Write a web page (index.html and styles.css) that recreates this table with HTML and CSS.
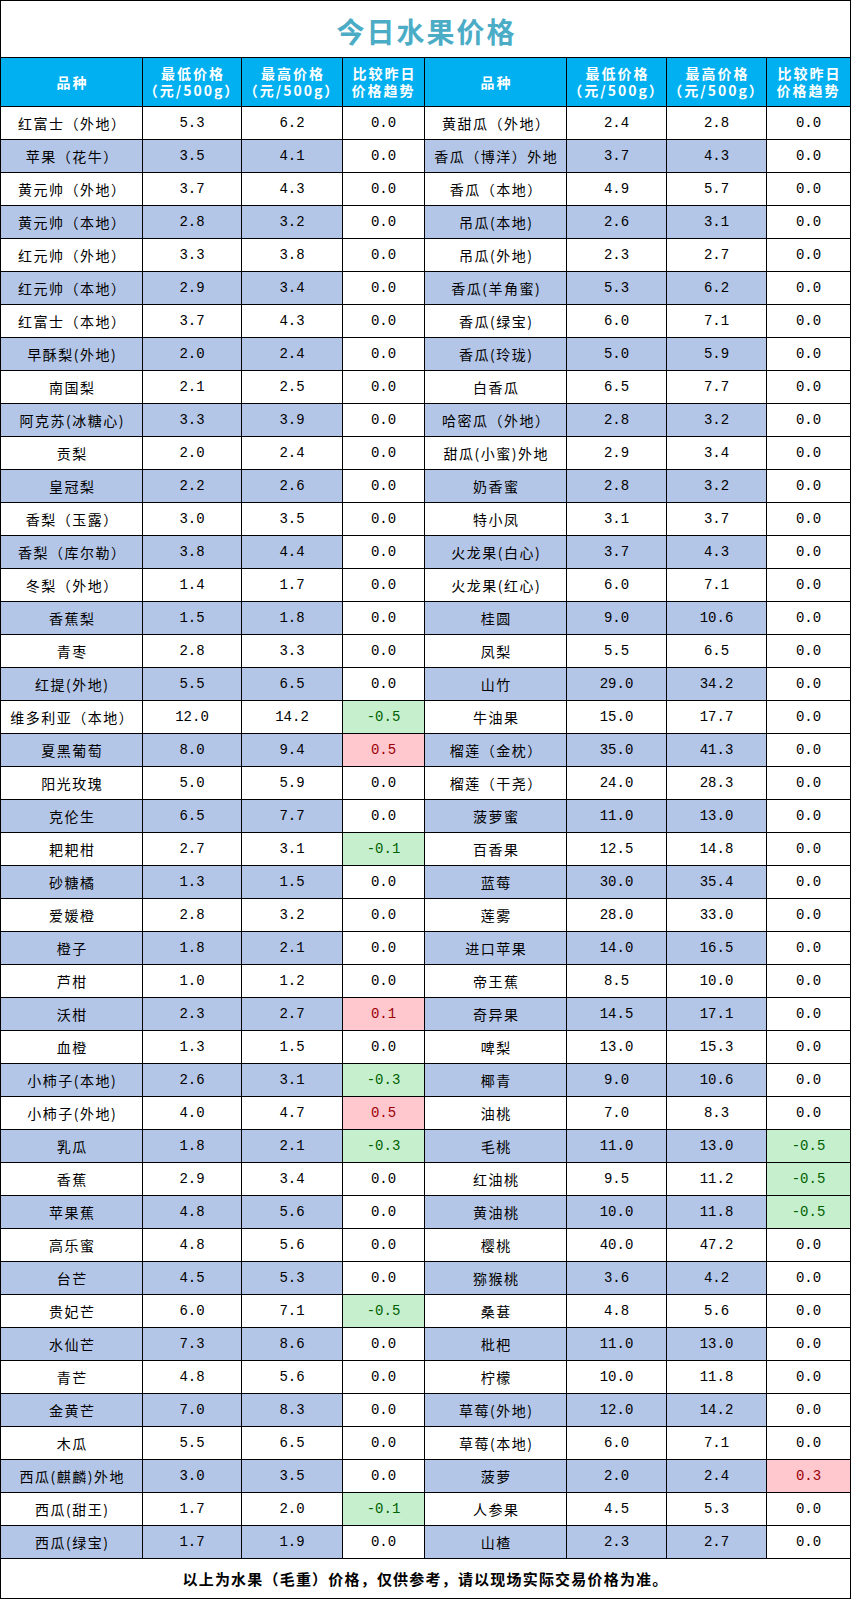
FILE: index.html
```html
<!DOCTYPE html>
<html lang="zh-CN">
<head>
<meta charset="utf-8">
<title>今日水果价格</title>
<link rel="stylesheet" href="styles.css">
</head>
<body>
<div class="sheet">
  <div class="title">今日水果价格</div>

  <div class="hd">品种</div>
  <div class="hd">最低价格<br>（元/500g）</div>
  <div class="hd">最高价格<br>（元/500g）</div>
  <div class="hd">比较昨日<br>价格趋势</div>
  <div class="hd">品种</div>
  <div class="hd">最低价格<br>（元/500g）</div>
  <div class="hd">最高价格<br>（元/500g）</div>
  <div class="hd">比较昨日<br>价格趋势</div>

  <div class="row"><div class="n">红富士（外地）</div><div>5.3</div><div>6.2</div><div class="t">0.0</div><div class="n">黄甜瓜（外地）</div><div>2.4</div><div>2.8</div><div class="t">0.0</div></div>
  <div class="row b"><div class="n">苹果（花牛）</div><div>3.5</div><div>4.1</div><div class="t">0.0</div><div class="n">香瓜（博洋）外地</div><div>3.7</div><div>4.3</div><div class="t">0.0</div></div>
  <div class="row"><div class="n">黄元帅（外地）</div><div>3.7</div><div>4.3</div><div class="t">0.0</div><div class="n">香瓜（本地）</div><div>4.9</div><div>5.7</div><div class="t">0.0</div></div>
  <div class="row b"><div class="n">黄元帅（本地）</div><div>2.8</div><div>3.2</div><div class="t">0.0</div><div class="n">吊瓜(本地)</div><div>2.6</div><div>3.1</div><div class="t">0.0</div></div>
  <div class="row"><div class="n">红元帅（外地）</div><div>3.3</div><div>3.8</div><div class="t">0.0</div><div class="n">吊瓜(外地)</div><div>2.3</div><div>2.7</div><div class="t">0.0</div></div>
  <div class="row b"><div class="n">红元帅（本地）</div><div>2.9</div><div>3.4</div><div class="t">0.0</div><div class="n">香瓜(羊角蜜)</div><div>5.3</div><div>6.2</div><div class="t">0.0</div></div>
  <div class="row"><div class="n">红富士（本地）</div><div>3.7</div><div>4.3</div><div class="t">0.0</div><div class="n">香瓜(绿宝)</div><div>6.0</div><div>7.1</div><div class="t">0.0</div></div>
  <div class="row b"><div class="n">早酥梨(外地)</div><div>2.0</div><div>2.4</div><div class="t">0.0</div><div class="n">香瓜(玲珑)</div><div>5.0</div><div>5.9</div><div class="t">0.0</div></div>
  <div class="row"><div class="n">南国梨</div><div>2.1</div><div>2.5</div><div class="t">0.0</div><div class="n">白香瓜</div><div>6.5</div><div>7.7</div><div class="t">0.0</div></div>
  <div class="row b"><div class="n">阿克苏(冰糖心)</div><div>3.3</div><div>3.9</div><div class="t">0.0</div><div class="n">哈密瓜（外地）</div><div>2.8</div><div>3.2</div><div class="t">0.0</div></div>
  <div class="row"><div class="n">贡梨</div><div>2.0</div><div>2.4</div><div class="t">0.0</div><div class="n">甜瓜(小蜜)外地</div><div>2.9</div><div>3.4</div><div class="t">0.0</div></div>
  <div class="row b"><div class="n">皇冠梨</div><div>2.2</div><div>2.6</div><div class="t">0.0</div><div class="n">奶香蜜</div><div>2.8</div><div>3.2</div><div class="t">0.0</div></div>
  <div class="row"><div class="n">香梨（玉露）</div><div>3.0</div><div>3.5</div><div class="t">0.0</div><div class="n">特小凤</div><div>3.1</div><div>3.7</div><div class="t">0.0</div></div>
  <div class="row b"><div class="n">香梨（库尔勒）</div><div>3.8</div><div>4.4</div><div class="t">0.0</div><div class="n">火龙果(白心)</div><div>3.7</div><div>4.3</div><div class="t">0.0</div></div>
  <div class="row"><div class="n">冬梨（外地）</div><div>1.4</div><div>1.7</div><div class="t">0.0</div><div class="n">火龙果(红心)</div><div>6.0</div><div>7.1</div><div class="t">0.0</div></div>
  <div class="row b"><div class="n">香蕉梨</div><div>1.5</div><div>1.8</div><div class="t">0.0</div><div class="n">桂圆</div><div>9.0</div><div>10.6</div><div class="t">0.0</div></div>
  <div class="row"><div class="n">青枣</div><div>2.8</div><div>3.3</div><div class="t">0.0</div><div class="n">凤梨</div><div>5.5</div><div>6.5</div><div class="t">0.0</div></div>
  <div class="row b"><div class="n">红提(外地)</div><div>5.5</div><div>6.5</div><div class="t">0.0</div><div class="n">山竹</div><div>29.0</div><div>34.2</div><div class="t">0.0</div></div>
  <div class="row"><div class="n">维多利亚（本地）</div><div>12.0</div><div>14.2</div><div class="t g">-0.5</div><div class="n">牛油果</div><div>15.0</div><div>17.7</div><div class="t">0.0</div></div>
  <div class="row b"><div class="n">夏黑葡萄</div><div>8.0</div><div>9.4</div><div class="t r">0.5</div><div class="n">榴莲（金枕）</div><div>35.0</div><div>41.3</div><div class="t">0.0</div></div>
  <div class="row"><div class="n">阳光玫瑰</div><div>5.0</div><div>5.9</div><div class="t">0.0</div><div class="n">榴莲（干尧）</div><div>24.0</div><div>28.3</div><div class="t">0.0</div></div>
  <div class="row b"><div class="n">克伦生</div><div>6.5</div><div>7.7</div><div class="t">0.0</div><div class="n">菠萝蜜</div><div>11.0</div><div>13.0</div><div class="t">0.0</div></div>
  <div class="row"><div class="n">耙耙柑</div><div>2.7</div><div>3.1</div><div class="t g">-0.1</div><div class="n">百香果</div><div>12.5</div><div>14.8</div><div class="t">0.0</div></div>
  <div class="row b"><div class="n">砂糖橘</div><div>1.3</div><div>1.5</div><div class="t">0.0</div><div class="n">蓝莓</div><div>30.0</div><div>35.4</div><div class="t">0.0</div></div>
  <div class="row"><div class="n">爱媛橙</div><div>2.8</div><div>3.2</div><div class="t">0.0</div><div class="n">莲雾</div><div>28.0</div><div>33.0</div><div class="t">0.0</div></div>
  <div class="row b"><div class="n">橙子</div><div>1.8</div><div>2.1</div><div class="t">0.0</div><div class="n">进口苹果</div><div>14.0</div><div>16.5</div><div class="t">0.0</div></div>
  <div class="row"><div class="n">芦柑</div><div>1.0</div><div>1.2</div><div class="t">0.0</div><div class="n">帝王蕉</div><div>8.5</div><div>10.0</div><div class="t">0.0</div></div>
  <div class="row b"><div class="n">沃柑</div><div>2.3</div><div>2.7</div><div class="t r">0.1</div><div class="n">奇异果</div><div>14.5</div><div>17.1</div><div class="t">0.0</div></div>
  <div class="row"><div class="n">血橙</div><div>1.3</div><div>1.5</div><div class="t">0.0</div><div class="n">啤梨</div><div>13.0</div><div>15.3</div><div class="t">0.0</div></div>
  <div class="row b"><div class="n">小柿子(本地)</div><div>2.6</div><div>3.1</div><div class="t g">-0.3</div><div class="n">椰青</div><div>9.0</div><div>10.6</div><div class="t">0.0</div></div>
  <div class="row"><div class="n">小柿子(外地)</div><div>4.0</div><div>4.7</div><div class="t r">0.5</div><div class="n">油桃</div><div>7.0</div><div>8.3</div><div class="t">0.0</div></div>
  <div class="row b"><div class="n">乳瓜</div><div>1.8</div><div>2.1</div><div class="t g">-0.3</div><div class="n">毛桃</div><div>11.0</div><div>13.0</div><div class="t g">-0.5</div></div>
  <div class="row"><div class="n">香蕉</div><div>2.9</div><div>3.4</div><div class="t">0.0</div><div class="n">红油桃</div><div>9.5</div><div>11.2</div><div class="t g">-0.5</div></div>
  <div class="row b"><div class="n">苹果蕉</div><div>4.8</div><div>5.6</div><div class="t">0.0</div><div class="n">黄油桃</div><div>10.0</div><div>11.8</div><div class="t g">-0.5</div></div>
  <div class="row"><div class="n">高乐蜜</div><div>4.8</div><div>5.6</div><div class="t">0.0</div><div class="n">樱桃</div><div>40.0</div><div>47.2</div><div class="t">0.0</div></div>
  <div class="row b"><div class="n">台芒</div><div>4.5</div><div>5.3</div><div class="t">0.0</div><div class="n">猕猴桃</div><div>3.6</div><div>4.2</div><div class="t">0.0</div></div>
  <div class="row"><div class="n">贵妃芒</div><div>6.0</div><div>7.1</div><div class="t g">-0.5</div><div class="n">桑葚</div><div>4.8</div><div>5.6</div><div class="t">0.0</div></div>
  <div class="row b"><div class="n">水仙芒</div><div>7.3</div><div>8.6</div><div class="t">0.0</div><div class="n">枇杷</div><div>11.0</div><div>13.0</div><div class="t">0.0</div></div>
  <div class="row"><div class="n">青芒</div><div>4.8</div><div>5.6</div><div class="t">0.0</div><div class="n">柠檬</div><div>10.0</div><div>11.8</div><div class="t">0.0</div></div>
  <div class="row b"><div class="n">金黄芒</div><div>7.0</div><div>8.3</div><div class="t">0.0</div><div class="n">草莓(外地)</div><div>12.0</div><div>14.2</div><div class="t">0.0</div></div>
  <div class="row"><div class="n">木瓜</div><div>5.5</div><div>6.5</div><div class="t">0.0</div><div class="n">草莓(本地)</div><div>6.0</div><div>7.1</div><div class="t">0.0</div></div>
  <div class="row b"><div class="n">西瓜(麒麟)外地</div><div>3.0</div><div>3.5</div><div class="t">0.0</div><div class="n">菠萝</div><div>2.0</div><div>2.4</div><div class="t r">0.3</div></div>
  <div class="row"><div class="n">西瓜(甜王)</div><div>1.7</div><div>2.0</div><div class="t g">-0.1</div><div class="n">人参果</div><div>4.5</div><div>5.3</div><div class="t">0.0</div></div>
  <div class="row b"><div class="n">西瓜(绿宝)</div><div>1.7</div><div>1.9</div><div class="t">0.0</div><div class="n">山楂</div><div>2.3</div><div>2.7</div><div class="t">0.0</div></div>

  <div class="foot">以上为水果（毛重）价格，仅供参考，请以现场实际交易价格为准。</div>
</div>
</body>
</html>
```

FILE: styles.css
```css
html, body {
  margin: 0;
  padding: 0;
  background: #fff;
}

.sheet {
  display: grid;
  grid-template-columns: 141px 98px 100px 81px 141px 99px 99px 83px;
  gap: 1px;
  padding: 1px;
  background: #000;
  width: max-content;
  font-family: "Noto Sans CJK SC", "Noto Sans", sans-serif;
  color: #000;
}

.title {
  grid-column: 1 / -1;
  height: 56px;
  background: #fff;
  display: flex;
  align-items: center;
  justify-content: center;
  padding-top: 4px;
  box-sizing: border-box;
  color: #4bacc6;
  font-size: 28px;
  font-weight: 700;
  letter-spacing: 2px;
  text-indent: 2px;
}

.hd {
  height: 48px;
  background: #00b0f0;
  color: #fff;
  display: flex;
  align-items: center;
  justify-content: center;
  text-align: center;
  font-size: 14px;
  font-weight: 700;
  line-height: 17px;
  letter-spacing: 2px;
  text-indent: 2px;
}

.row {
  display: contents;
}

.row > div {
  height: 32px;
  background: #fff;
  display: flex;
  align-items: center;
  justify-content: center;
  font-family: "Liberation Mono", "DejaVu Sans Mono", monospace;
  font-size: 14px;
  white-space: nowrap;
}

.row.b > div {
  background: #b4c6e7;
}

.row > div.n {
  font-family: "Noto Sans CJK SC", "Noto Sans", sans-serif;
  font-size: 14px;
  letter-spacing: 1.5px;
  text-indent: 1.5px;
}

.row > div.t,
.row.b > div.t {
  background: #fff;
}

.row > div.t.g,
.row.b > div.t.g {
  background: #c6efce;
  color: #006100;
}

.row > div.t.r,
.row.b > div.t.r {
  background: #ffc7ce;
  color: #9c0006;
}

.foot {
  grid-column: 1 / -1;
  height: 39px;
  background: #fff;
  display: flex;
  align-items: center;
  justify-content: center;
  font-size: 15px;
  font-weight: 700;
  letter-spacing: 1.2px;
}
```
